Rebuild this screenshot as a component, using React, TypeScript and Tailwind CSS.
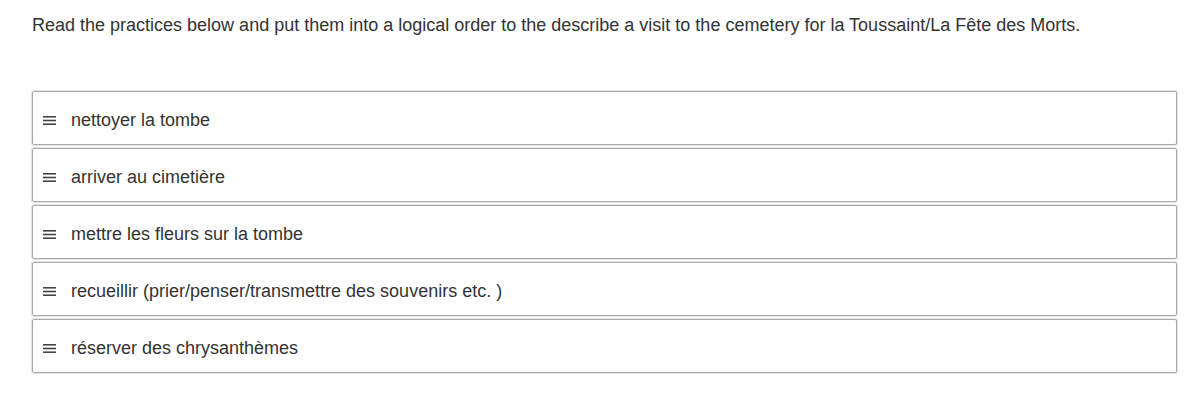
import React from "react";

const items = [
  "nettoyer la tombe",
  "arriver au cimetière",
  "mettre les fleurs sur la tombe",
  "recueillir (prier/penser/transmettre des souvenirs etc. )",
  "réserver des chrysanthèmes",
];

function Grip() {
  return (
    <svg width="13" height="9" viewBox="0 0 13 9" className="shrink-0">
      <rect x="0" y="0" width="13" height="1.6" fill="#444" />
      <rect x="0" y="3.7" width="13" height="1.6" fill="#444" />
      <rect x="0" y="7.4" width="13" height="1.6" fill="#444" />
    </svg>
  );
}

export default function App() {
  return (
    <div
      className="w-[1200px] h-[404px] bg-white text-[#333]"
      style={{ fontFamily: '"Liberation Sans", Arial, sans-serif' }}
    >
      <div className="pl-[32px] pt-[14px] text-[18px] leading-[23px]">
        Read the practices below and put them into a logical order to the describe a visit to the cemetery for la Toussaint/La Fête des Morts.
      </div>
      <div className="ml-[32px] mt-[54px] w-[1145px] flex flex-col gap-[3px]">
        {items.map((t) => (
          <div
            key={t}
            className="h-[54px] border border-[#a9a9a9] rounded-[2px] shadow-[0_0_0_1px_#e4e4e4] flex items-center pl-[10px] pt-[4px] gap-[15px] text-[18px] text-[#333]"
          >
            <Grip />
            <span>{t}</span>
          </div>
        ))}
      </div>
    </div>
  );
}
